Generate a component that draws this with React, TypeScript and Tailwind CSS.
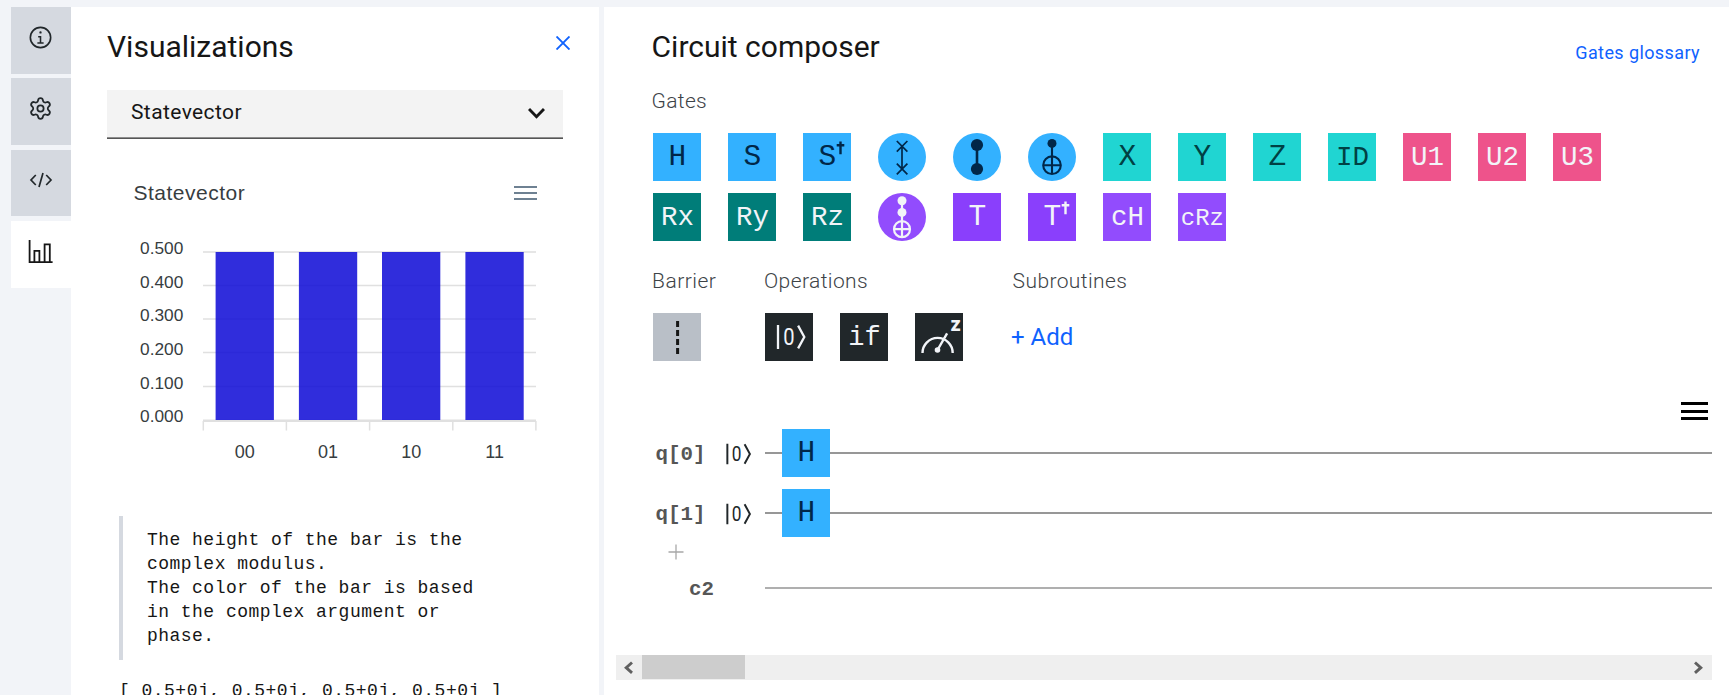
import type { ReactNode } from "react";
import { Settings } from "lucide-react";

const sans = "font-['Roboto','Liberation_Sans',sans-serif]";
const mono = "font-['Liberation_Mono',monospace]";

/* ---------- Side navigation ---------- */

function InfoIcon() {
  return (
    <svg className="size-[25px]" viewBox="0 0 32 32" fill="#21272a">
      <path d="M17 22V14H13v2h2v6H12v2h8V22zM16 8a1.5 1.5 0 1 0 1.5 1.5A1.5 1.5 0 0 0 16 8z" />
      <circle cx="16" cy="16" r="13" fill="none" stroke="#21272a" strokeWidth="2.1" />
    </svg>
  );
}

function CodeIcon() {
  return (
    <svg className="size-[24px]" viewBox="0 0 24 24" fill="none" stroke="#21272a" strokeWidth="1.7">
      <path d="M6.8 7L2 12l4.8 5M17.2 7L22 12l-4.8 5M14 5l-4 14" />
    </svg>
  );
}

function ChartIcon() {
  return (
    <svg className="size-[25px]" viewBox="0 0 25 25" fill="none" stroke="#161616" strokeWidth="1.8">
      <path d="M1.6 1v22.1H24.6M6.4 23V11.9h5V23M16.6 23V5.4h5.2V23" />
    </svg>
  );
}

function NavTab({ children, className }: { children: ReactNode; className: string }) {
  return <button className={`flex w-full shrink-0 justify-center pr-[0.5px] ${className}`}>{children}</button>;
}

/* ---------- Statevector chart ---------- */

const yTicks = [
  { label: "0.500", line: 252, base: 254 },
  { label: "0.400", line: 285.5, base: 288 },
  { label: "0.300", line: 319, base: 321 },
  { label: "0.200", line: 352.6, base: 355 },
  { label: "0.100", line: 386.4, base: 389 },
  { label: "0.000", line: 420.8, base: 421.7 },
];
const bars = [
  { label: "00", x: 215.6 },
  { label: "01", x: 298.9 },
  { label: "10", x: 382 },
  { label: "11", x: 465.4 },
];

function BarChart() {
  return (
    <svg className="block h-[255px] w-[456px]" viewBox="107 225 456 255">
      {yTicks.map((t, i) => (
        <g key={t.label}>
          <path
            d={`M203 ${t.line}H536`}
            stroke={i === 0 ? "#e6e6e6" : "#e0e0e0"}
            strokeWidth={i === 0 ? 2 : i === 5 ? 2.6 : 1.5}
          />
          <text x="183.3" y={t.base} textAnchor="end" fontSize="17.3" fill="#373d3f" className="font-['Liberation_Sans',sans-serif]">
            {t.label}
          </text>
        </g>
      ))}
      <path d="M203.3 421v9.5M286.4 421v9.5M369.6 421v9.5M452.8 421v9.5M535.9 421v9.5" stroke="#e0e0e0" strokeWidth="1.5" />
      {bars.map((b) => (
        <g key={b.label}>
          <rect x={b.x} y="252" width="58.3" height="168" fill="#0c08d6" fillOpacity="0.85" />
          <text x={b.x + 29.2} y="457.6" textAnchor="middle" fontSize="18" fill="#373d3f" className="font-['Liberation_Sans',sans-serif]">
            {b.label}
          </text>
        </g>
      ))}
    </svg>
  );
}

/* ---------- Gates ---------- */

function Tile({ color, children }: { color: string; children?: ReactNode }) {
  return <div className={`relative flex size-12 shrink-0 items-center justify-center leading-[48px] ${mono} ${color}`}>{children}</div>;
}

function Dagger({ className }: { className: string }) {
  return (
    <svg className={`absolute h-[14px] w-[9px] ${className}`} viewBox="0 0 9 14" fill="none" stroke="currentColor" strokeWidth="2.4">
      <path d="M4.5 0.5v12.8M0.7 4.3h7.6" />
    </svg>
  );
}

function Ket({ className }: { className: string }) {
  return (
    <svg className={className} viewBox="10 10 31 28" fill="none" stroke="currentColor" strokeWidth="2.3">
      <path d="M12.5 12v24M32.6 12.6L38.8 24l-6.2 11.4" />
      <text
        transform="translate(23.3 32.4) scale(0.84 1)"
        textAnchor="middle"
        fontSize="24"
        fill="currentColor"
        stroke="none"
        className="font-['Roboto',sans-serif]"
      >
        0
      </text>
    </svg>
  );
}

const BLUE = "bg-[#33b1ff] text-[#012749]";
const CYAN = "bg-[#20d5d2] text-[#004144]";
const PINK = "bg-[#ee538b] text-[#f2f4f8]";
const TEAL = "bg-[#007d79] text-[#f2f4f8]";
const VIOLET = "bg-[#8a3ffc] text-[#f2f4f8]";
const LILAC = "bg-[#924cfd] text-[#f2f4f8]";
const INK = "bg-[#21272a] text-[#f2f4f8]";

const one = "text-[29.5px]";
const two = "text-[27.5px] pt-px";

function SwapGate() {
  return (
    <Tile color={`rounded-full ${BLUE}`}>
      <svg className="size-12" viewBox="0 0 48 48" fill="none" stroke="currentColor" strokeWidth="1.7">
        <path d="M24 13.5v22.5M18.8 8l10.6 10.6M29.4 8L18.8 18.6M18.8 30.6l10.6 10.8M29.4 30.6L18.8 41.4" />
      </svg>
    </Tile>
  );
}

function CzGate() {
  return (
    <Tile color={`rounded-full ${BLUE}`}>
      <svg className="size-12" viewBox="0 0 48 48" fill="currentColor">
        <circle cx="24" cy="12" r="6.1" />
        <circle cx="24" cy="36" r="6.1" />
        <path d="M24 12v24" stroke="currentColor" strokeWidth="2.6" />
      </svg>
    </Tile>
  );
}

function CxGate() {
  return (
    <Tile color={`rounded-full ${BLUE}`}>
      <svg className="size-12" viewBox="0 0 48 48" fill="none" stroke="currentColor" strokeWidth="2.1">
        <circle cx="24" cy="10.4" r="4.5" fill="currentColor" stroke="none" />
        <circle cx="24" cy="32.2" r="8.8" />
        <path d="M24 10v31M15 32.2h18" />
      </svg>
    </Tile>
  );
}

function CcxGate() {
  return (
    <Tile color={`rounded-full ${LILAC}`}>
      <svg className="size-12" viewBox="0 0 48 48" fill="none" stroke="currentColor" strokeWidth="2.2">
        <circle cx="24" cy="7.7" r="4.5" fill="currentColor" stroke="none" />
        <circle cx="24" cy="19.4" r="4.5" fill="currentColor" stroke="none" />
        <circle cx="24" cy="36.2" r="8" />
        <path d="M24 8v36M16 36.2h16" />
      </svg>
    </Tile>
  );
}

function Gates() {
  return (
    <div className="ml-[49.4px] mt-[17px] flex flex-col gap-3">
      <div className="flex gap-[27px]">
        <Tile color={BLUE}><span className={one}>H</span></Tile>
        <Tile color={BLUE}><span className={one}>S</span></Tile>
        <Tile color={BLUE}><span className={one}>S</span><Dagger className="left-[32.5px] top-[7.5px]" /></Tile>
        <SwapGate />
        <CzGate />
        <CxGate />
        <Tile color={CYAN}><span className={one}>X</span></Tile>
        <Tile color={CYAN}><span className={one}>Y</span></Tile>
        <Tile color={CYAN}><span className={one}>Z</span></Tile>
        <Tile color={CYAN}><span className={two}>ID</span></Tile>
        <Tile color={PINK}><span className={two}>U1</span></Tile>
        <Tile color={PINK}><span className={two}>U2</span></Tile>
        <Tile color={PINK}><span className={two}>U3</span></Tile>
      </div>
      <div className="flex gap-[27px]">
        <Tile color={TEAL}><span className={two}>Rx</span></Tile>
        <Tile color={TEAL}><span className={two}>Ry</span></Tile>
        <Tile color={TEAL}><span className={two}>Rz</span></Tile>
        <CcxGate />
        <Tile color={VIOLET}><span className={one}>T</span></Tile>
        <Tile color={VIOLET}><span className={one}>T</span><Dagger className="left-[32.5px] top-[7.5px]" /></Tile>
        <Tile color={LILAC}><span className={two}>cH</span></Tile>
        <Tile color={LILAC}><span className="pt-[3px] text-[24px]">cRz</span></Tile>
      </div>
    </div>
  );
}

const label = "text-[21px] leading-[30px] font-light text-[#3d4347]";

function Operations() {
  return (
    <div className="ml-[49px] mt-[25px] flex">
      <div className="w-[112px]">
        <div className={`${label} -ml-px tracking-[0.5px]`}>Barrier</div>
        <div className="mt-[17px] pl-[0.4px]">
          <Tile color="bg-[#b9bfc7] text-[#161616]">
            <svg className="size-12" viewBox="0 0 48 48">
              <path d="M24.6 8v33" stroke="currentColor" strokeWidth="3" strokeDasharray="6 3" />
            </svg>
          </Tile>
        </div>
      </div>
      <div className="w-[247px]">
        <div className={`${label} -ml-px tracking-[0.4px]`}>Operations</div>
        <div className="mt-[17px] flex gap-[27px] pl-[0.4px]">
          <Tile color={INK}><Ket className="h-[28px] w-[31px] translate-x-[1.5px]" /></Tile>
          <Tile color={INK}><span className="text-[27px] pt-0.5">if</span></Tile>
          <Tile color={INK}>
            <svg className="size-12" viewBox="0 0 48 48" fill="none" stroke="currentColor" strokeWidth="2.4">
              <path d="M7.5 40a15.1 15.1 0 0 1 30.2 0M22.5 37l9.6-16.6" />
              <circle cx="22.5" cy="37" r="2.8" fill="currentColor" stroke="none" />
              <text x="40.5" y="18" textAnchor="middle" fontSize="20" fontWeight="800" fill="currentColor" stroke="none" className="font-['Roboto',sans-serif]">
                z
              </text>
            </svg>
          </Tile>
        </div>
      </div>
      <div>
        <div className={`${label} pl-[0.6px] tracking-[0.4px]`}>Subroutines</div>
        <button className="-ml-px mt-[25px] block text-[24px] leading-[32px] text-[#0f62fe]">+ Add</button>
      </div>
    </div>
  );
}

/* ---------- Circuit ---------- */

function QubitRow({ name }: { name: string }) {
  return (
    <div className="flex h-12 items-center">
      <span className={`w-[69px] pt-[3px] text-[20.8px] leading-[45px] font-bold text-[#565656] ${mono}`}>{name}</span>
      <Ket className="mt-px h-[24px] w-[27px] text-[#21272a]" />
      <div className="ml-[13.4px] h-[2px] w-[17.5px] bg-[#979797]" />
      <Tile color={BLUE}><span className={one}>H</span></Tile>
      <div className="h-[2px] flex-1 bg-[#979797]" />
    </div>
  );
}

function Circuit() {
  return (
    <div className="mr-[17px] mt-[9px] flex flex-col gap-3 pl-[51.5px]">
      <QubitRow name="q[0]" />
      <QubitRow name="q[1]" />
      <div className="-mt-[5px] pl-[12.5px]">
        <svg className="size-[16px]" viewBox="0 0 16 16" stroke="#a8a8a8" strokeWidth="1.3">
          <path d="M8 .5v15M.5 8h15" />
        </svg>
      </div>
      <div className="mt-[3px] flex h-[26px] items-center pl-[33.5px]">
        <span className={`w-[76px] pt-[3px] text-[20.8px] leading-[24px] font-bold text-[#565656] ${mono}`}>c2</span>
        <div className="h-[2px] flex-1 bg-[#afafaf]" />
      </div>
    </div>
  );
}

export default function App() {
  return (
    <div className={`flex h-[695px] w-full overflow-hidden bg-[#f2f4f8] pl-[11px] pt-[7px] text-[#161616] ${sans}`}>
      <nav className="flex w-[60px] shrink-0 flex-col">
        <NavTab className="h-[67px] bg-[#d5d9e0] pt-[17.5px]"><InfoIcon /></NavTab>
        <NavTab className="mt-1 h-[67px] bg-[#d5d9e0] pt-[17.5px]">
          <Settings size={25} strokeWidth={1.7} color="#21272a" />
        </NavTab>
        <NavTab className="mt-[5px] h-[66px] bg-[#d5d9e0] pt-[18px]"><CodeIcon /></NavTab>
        <NavTab className="mt-[5px] h-[67px] bg-white pt-[18px]"><ChartIcon /></NavTab>
      </nav>

      <section className="w-[528px] shrink-0 bg-white pl-9 pr-9">
        <header className="flex h-[60px] justify-between pt-5">
          <h1 className="text-[30px] leading-[40px] font-normal">Visualizations</h1>
          <svg className="-mr-[7px] mt-[9px] size-[14px]" viewBox="0 0 14 14" stroke="#0f62fe" strokeWidth="1.9">
            <path d="M.5.5l13 13M13.5.5l-13 13" />
          </svg>
        </header>

        <div className="mt-[23px] flex h-[49px] items-center justify-between border-b border-[#555] bg-[#f3f3f3] pb-1 pl-6 pr-[18px] shadow-[inset_0_-1px_0_#8d8d8d]">
          <span className="text-[21px] leading-[30px] tracking-[0.4px]">Statevector</span>
          <svg className="mt-[3px] h-[11px] w-[17px]" viewBox="0 0 17 11" fill="none" stroke="#161616" strokeWidth="2.9">
            <path d="M1 1l7.5 7.7L16 1" />
          </svg>
        </div>

        <div className="mt-[39px] flex h-[30px] items-center justify-between pl-[26.5px] pr-[26px]">
          <span className="font-['Liberation_Sans',sans-serif] text-[21px] leading-[30px] tracking-[0.5px] text-[#373d3f]">Statevector</span>
          <div className="flex flex-col gap-[3.5px]">
            <div className="h-[2.5px] w-[23px] bg-[#6e8192]" />
            <div className="h-[2.5px] w-[23px] bg-[#6e8192]" />
            <div className="h-[2.5px] w-[23px] bg-[#6e8192]" />
          </div>
        </div>

        <div className="mt-[17px]"><BarChart /></div>

        <blockquote className={`ml-3 mt-9 border-l-4 border-[#d5d9e0] py-3 pl-6 text-[18px] leading-6 tracking-[0.47px] ${mono}`}>
          The height of the bar is the
          <br />
          complex modulus.
          <br />
          The color of the bar is based
          <br />
          in the complex argument or
          <br />
          phase.
        </blockquote>
        <pre className={`ml-3 mt-[19px] text-[18px] leading-6 tracking-[0.47px] ${mono}`}>[ 0.5+0j, 0.5+0j, 0.5+0j, 0.5+0j ]</pre>
      </section>

      <section className="ml-[5px] flex min-w-0 flex-1 flex-col bg-white">
        <header className="mt-5 flex h-10 justify-between pl-[47.6px] pr-[29px]">
          <h1 className="text-[30px] leading-[40px] font-normal">Circuit composer</h1>
          <a className="pt-[11px] text-[18px] leading-[30px] tracking-[0.4px] text-[#0f62fe]">Gates glossary</a>
        </header>
        <div className={`${label} ml-[47.6px] mt-[19px] tracking-[0.3px]`}>Gates</div>
        <Gates />
        <Operations />
        <div className="mr-[21.5px] mt-[41px] flex flex-col items-end gap-[4.5px]">
          <div className="h-[3px] w-[27px] bg-black" />
          <div className="h-[3px] w-[27px] bg-black" />
          <div className="h-[3px] w-[27px] bg-black" />
        </div>
        <Circuit />
        <div className="ml-3 mr-[17px] mt-[54px] flex h-[25px] shrink-0 bg-[#efefef]">
          <svg className="h-[25px] w-[26px]" viewBox="0 0 26 25" fill="none" stroke="#606060" strokeWidth="2.9">
            <path d="M16 7.5L10.2 12.7l5.8 5.2" />
          </svg>
          <div className="h-6 w-[103px] bg-[#cdcdcd]" />
          <svg className="ml-auto h-[25px] w-[26px]" viewBox="0 0 26 25" fill="none" stroke="#606060" strokeWidth="2.9">
            <path d="M9 7.5l5.8 5.2L9 17.9" />
          </svg>
        </div>
      </section>
    </div>
  );
}
